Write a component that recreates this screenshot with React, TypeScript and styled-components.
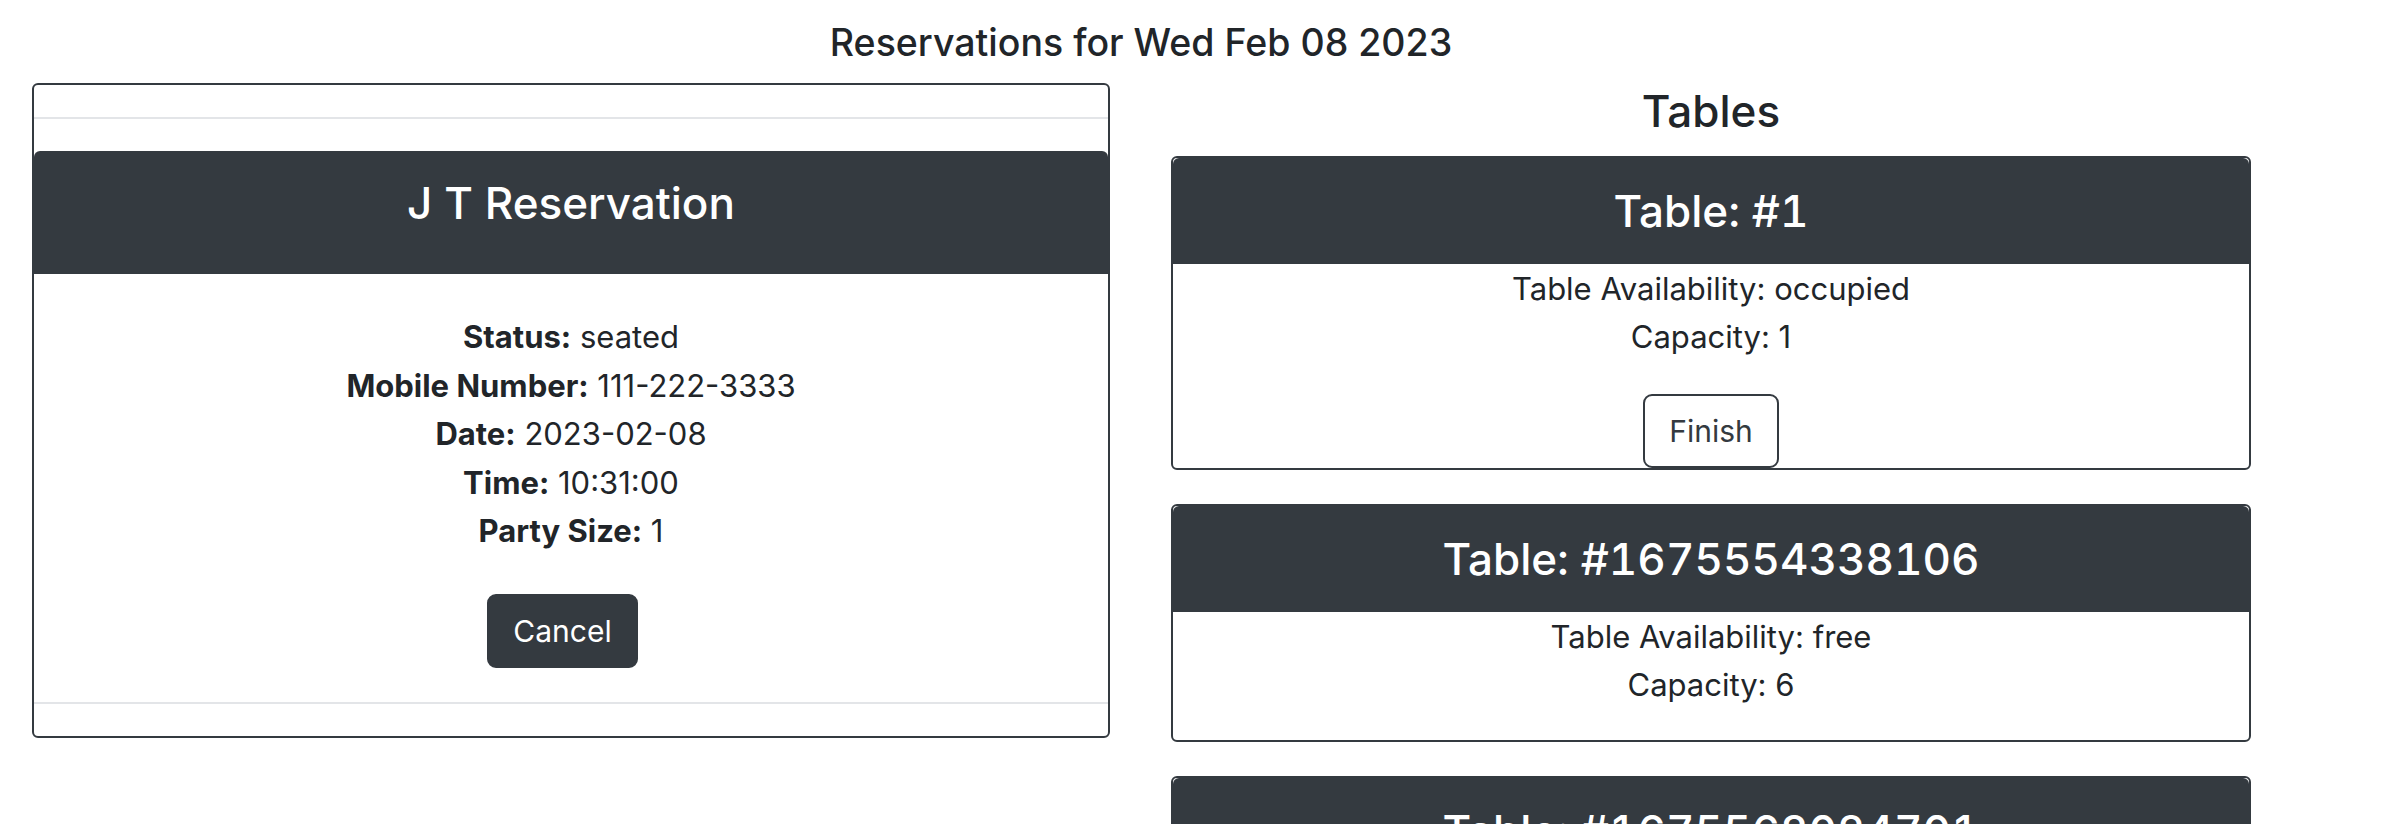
import React from "react";
import styled, { createGlobalStyle } from "styled-components";

const GlobalStyle = createGlobalStyle`
  html, body { margin: 0; padding: 0; background: #ffffff; overflow: hidden; }
  body {
    font-family: Inter, "Noto Sans", "Liberation Sans", sans-serif;
    color: #212529;
    -webkit-font-smoothing: antialiased;
  }
  * { box-sizing: border-box; }
`;

const Page = styled.main`
  width: 2250px;
  padding-left: 32px;
`;

const PageTitle = styled.h4`
  margin: 0;
  padding-top: 21px;
  height: 83px;
  font-size: 37.5px;
  line-height: 44px;
  font-weight: 500;
  text-align: center;
`;

const Columns = styled.div`
  display: flex;
  align-items: flex-start;
  gap: 61px;
`;

const LeftColumn = styled.section`
  width: 1078px;
  flex: none;
`;

const RightColumn = styled.section`
  width: 1080px;
  flex: none;
  display: flex;
  flex-direction: column;
`;

const ReservationCard = styled.article`
  border: 2px solid #343a40;
  border-radius: 6px;
  overflow: hidden;
`;

const Strip = styled.div<{ $edge: "top" | "bottom" }>`
  height: ${(p) => (p.$edge === "top" ? "33.5px" : "34px")};
  ${(p) =>
    p.$edge === "top"
      ? "border-bottom: 2px solid #e3e5e8;"
      : "border-top: 2px solid #e3e5e8;"}
`;

const DarkHeader = styled.header<{ $height: number; $top: number; $gap?: number }>`
  background: #343a40;
  color: #ffffff;
  height: ${(p) => p.$height}px;
  padding-top: ${(p) => p.$top}px;
  margin-top: ${(p) => p.$gap ?? 0}px;
  border-radius: 6px 6px 0 0;
  text-align: center;
`;

const HeaderTitle = styled.h2`
  margin: 0;
  font-size: 44px;
  line-height: 58px;
  font-weight: 500;
  font-feature-settings: "tnum" 1;
`;

const ReservationBody = styled.div`
  padding-top: 39.5px;
  text-align: center;
`;

const Line = styled.p`
  margin: 0;
  font-size: 31px;
  line-height: 48.5px;
`;

const Label = styled.strong`
  font-weight: 700;
`;

const ButtonRow = styled.div<{ $top: number; $bottom: number }>`
  display: flex;
  justify-content: center;
  padding-top: ${(p) => p.$top}px;
  padding-bottom: ${(p) => p.$bottom}px;
`;

const Button = styled.button<{ $variant: "dark" | "outline"; $shift?: number }>`
  font-family: inherit;
  font-size: 30px;
  line-height: 45px;
  padding: 12.5px 24px;
  margin-right: ${(p) => p.$shift ?? 0}px;
  border-radius: 9px;
  border: 2px solid #343a40;
  background: ${(p) => (p.$variant === "dark" ? "#343a40" : "#ffffff")};
  color: ${(p) => (p.$variant === "dark" ? "#ffffff" : "#343a40")};
  cursor: pointer;
`;

const TablesTitle = styled.h3`
  margin: 3px 0 20px;
  font-size: 44px;
  line-height: 50px;
  font-weight: 500;
  text-align: center;
`;

const TableCard = styled.article`
  border: 2px solid #343a40;
  border-radius: 6px;
  overflow: hidden;
  margin-bottom: 34px;
`;

const TableBody = styled.div<{ $bottom: number }>`
  padding-top: 0.75px;
  padding-bottom: ${(p) => p.$bottom}px;
  text-align: center;
`;

type Table = { id: string; status: string; capacity: number; finish?: boolean };

const tables: Table[] = [
  { id: "1", status: "occupied", capacity: 1, finish: true },
  { id: "1675554338106", status: "free", capacity: 6 },
  { id: "1675568024701", status: "free", capacity: 4 },
];

export default function App() {
  return (
    <>
      <GlobalStyle />
      <Page>
        <PageTitle>Reservations for Wed Feb 08 2023</PageTitle>
        <Columns>
          <LeftColumn>
            <ReservationCard>
              <Strip $edge="top" />
              <DarkHeader $height={123} $top={23.5} $gap={32}>
                <HeaderTitle>J T Reservation</HeaderTitle>
              </DarkHeader>
              <ReservationBody>
                <Line>
                  <Label>Status:</Label> seated
                </Line>
                <Line>
                  <Label>Mobile Number:</Label> 111-222-3333
                </Line>
                <Line>
                  <Label>Date:</Label> 2023-02-08
                </Line>
                <Line>
                  <Label>Time:</Label> 10:31:00
                </Line>
                <Line>
                  <Label>Party Size:</Label> 1
                </Line>
              </ReservationBody>
              <ButtonRow $top={38.5} $bottom={34}>
                <Button $variant="dark" $shift={17}>
                  Cancel
                </Button>
              </ButtonRow>
              <Strip $edge="bottom" />
            </ReservationCard>
          </LeftColumn>
          <RightColumn>
            <TablesTitle>Tables</TablesTitle>
            {tables.map((t) => (
              <TableCard key={t.id}>
                <DarkHeader $height={106} $top={24}>
                  <HeaderTitle>Table: #{t.id}</HeaderTitle>
                </DarkHeader>
                <TableBody $bottom={t.finish ? 32.25 : 30.25}>
                  <Line>Table Availability: {t.status}</Line>
                  <Line>Capacity: {t.capacity}</Line>
                </TableBody>
                {t.finish && (
                  <ButtonRow $top={0} $bottom={0}>
                    <Button $variant="outline">Finish</Button>
                  </ButtonRow>
                )}
              </TableCard>
            ))}
          </RightColumn>
        </Columns>
      </Page>
    </>
  );
}
